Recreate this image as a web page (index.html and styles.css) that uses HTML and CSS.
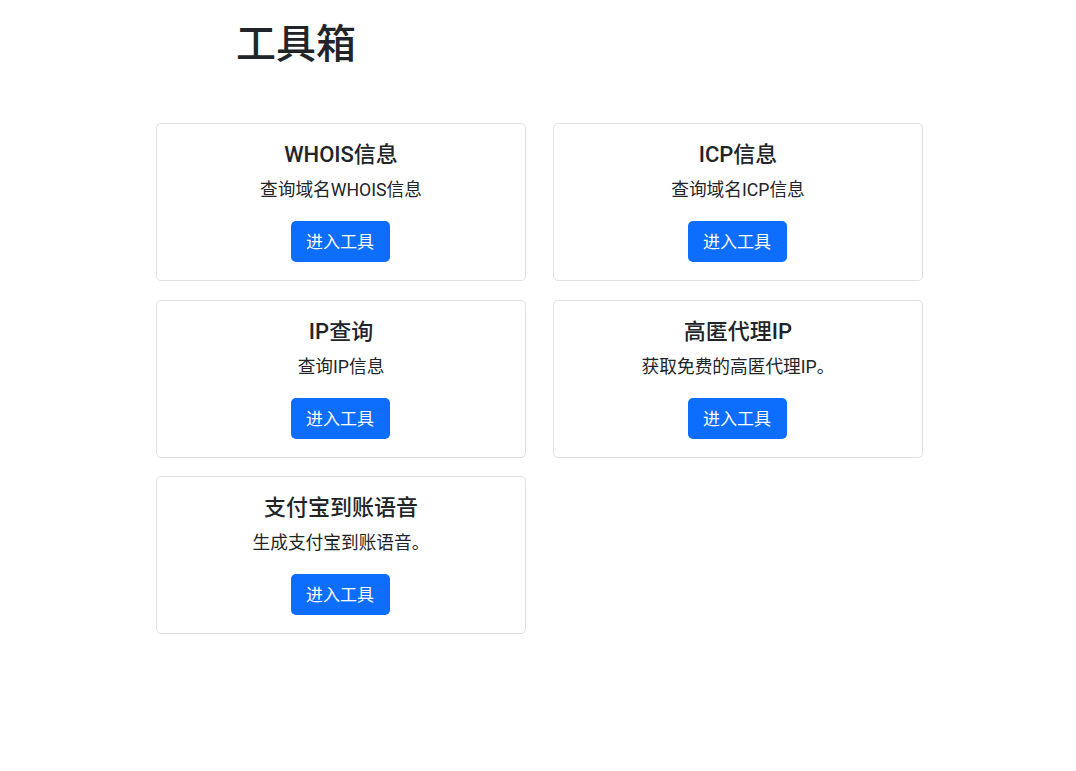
FILE: index.html
```html
<!DOCTYPE html>
<html lang="zh-CN">
<head>
<meta charset="utf-8">
<title>工具箱</title>
<link rel="stylesheet" href="styles.css">
</head>
<body>
<header class="page-head">
  <h1 class="page-title">工具箱</h1>
</header>
<main class="tools">
  <div class="card">
    <h5 class="card-title">WHOIS信息</h5>
    <p class="card-text">查询域名WHOIS信息</p>
    <a class="btn" href="#">进入工具</a>
  </div>
  <div class="card">
    <h5 class="card-title">ICP信息</h5>
    <p class="card-text">查询域名ICP信息</p>
    <a class="btn" href="#">进入工具</a>
  </div>
  <div class="card">
    <h5 class="card-title">IP查询</h5>
    <p class="card-text">查询IP信息</p>
    <a class="btn" href="#">进入工具</a>
  </div>
  <div class="card">
    <h5 class="card-title">高匿代理IP</h5>
    <p class="card-text">获取免费的高匿代理IP。</p>
    <a class="btn" href="#">进入工具</a>
  </div>
  <div class="card">
    <h5 class="card-title">支付宝到账语音</h5>
    <p class="card-text">生成支付宝到账语音。</p>
    <a class="btn" href="#">进入工具</a>
  </div>
</main>
</body>
</html>
```

FILE: styles.css
```css
* { box-sizing: border-box; }
html, body { margin: 0; padding: 0; background: #fff; }
body {
  font-family: Roboto, "Noto Sans CJK SC", "Noto Sans", sans-serif;
  color: #212529;
}
.page-head {
  padding: 21px 0 0 236px;
  height: 123px;
}
.page-title {
  margin: 0;
  font-size: 40px;
  line-height: 48px;
  font-weight: 500;
  color: #212529;
}
.tools {
  width: 767px;
  margin-left: 156px;
  display: grid;
  grid-template-columns: 370px 370px;
  column-gap: 27px;
  row-gap: 18.5px;
}
.card {
  border: 1px solid #dee2e6;
  border-radius: 5px;
  height: 158px;
  padding: 17px 16px 0;
  display: flex;
  flex-direction: column;
  align-items: center;
  text-align: center;
}
.card-title {
  margin: 0;
  font-size: 22px;
  line-height: 28px;
  font-weight: 500;
}
.card-text {
  margin: 9px 0 0;
  font-size: 17.7px;
  line-height: 24px;
}
.btn {
  margin-top: 19px;
  margin-right: 2px;
  display: inline-block;
  width: 99px;
  height: 41px;
  padding-top: 2px;
  line-height: 39px;
  background: #0d6efd;
  color: #fff;
  border-radius: 5px;
  font-size: 17px;
  text-decoration: none;
  text-align: center;
}
```
